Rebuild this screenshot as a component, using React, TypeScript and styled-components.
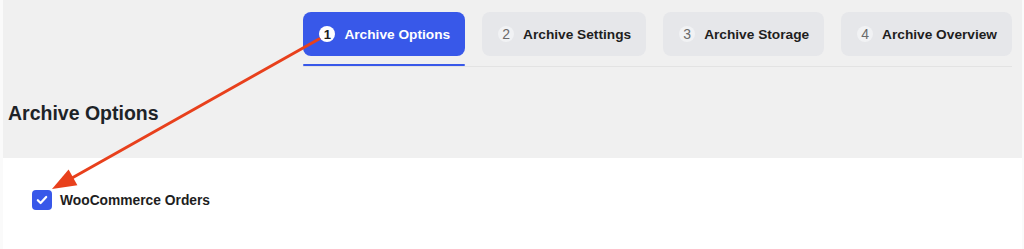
import React from "react";
import styled, { createGlobalStyle } from "styled-components";

const GlobalStyle = createGlobalStyle`
  html, body { margin: 0; padding: 0; background: #fafafa; }
  body { font-family: "Liberation Sans", Arial, sans-serif; -webkit-font-smoothing: antialiased; }
  * { box-sizing: border-box; }
`;

const Page = styled.div`
  position: relative;
  margin-left: 3px;
  width: 1019px;
  height: 249px;
  background: #f0f0f0;
  display: flex;
  flex-direction: column;
  overflow: hidden;
`;

const NavRow = styled.div`
  display: flex;
  justify-content: flex-end;
  padding: 12px 10px 0 0;
`;

const Nav = styled.nav`
  display: flex;
  gap: 17px;
  border-bottom: 1px solid #e3e3e3;
`;

const TabItem = styled.div`
  display: flex;
  flex-direction: column;
  gap: 8px;
`;

const TabButton = styled.div<{ $active?: boolean }>`
  height: 44px;
  display: flex;
  align-items: center;
  gap: 9px;
  padding: 0 15px 0 16px;
  border-radius: 8px;
  background: ${(p) => (p.$active ? "#3858e9" : "#e6e7ea")};
  color: ${(p) => (p.$active ? "#ffffff" : "#1e1e1e")};
  font-size: 13.7px;
  font-weight: 700;
  white-space: nowrap;
`;

const StepNum = styled.span<{ $active?: boolean }>`
  width: 16px;
  height: 16px;
  border-radius: 50%;
  display: flex;
  align-items: center;
  justify-content: center;
  font-size: ${(p) => (p.$active ? "13px" : "14px")};
  font-weight: ${(p) => (p.$active ? 700 : 400)};
  background: ${(p) => (p.$active ? "#ffffff" : "#f1f2f4")};
  color: ${(p) => (p.$active ? "#1e1e1e" : "#6b6b6b")};
`;

const Underline = styled.div<{ $active?: boolean }>`
  height: 2px;
  border-radius: 1px;
  background: ${(p) => (p.$active ? "#3858e9" : "transparent")};
`;

const Heading = styled.h2`
  margin: 32px 0 31px 5px;
  font-size: 19.5px;
  line-height: 28px;
  font-weight: 700;
  color: #1d2327;
`;

const Card = styled.div`
  flex: 1;
  background: #ffffff;
  padding: 32px 29px;
`;

const CheckRow = styled.label`
  display: flex;
  align-items: center;
  gap: 8px;
  font-size: 13.8px;
  font-weight: 700;
  color: #1e1e1e;
`;

const CheckBox = styled.span`
  width: 20px;
  height: 20px;
  border-radius: 4px;
  background: #3858e9;
  display: flex;
  align-items: center;
  justify-content: center;
`;

const Annotation = styled.svg`
  position: absolute;
  left: 0;
  top: 0;
  pointer-events: none;
`;

const tabs = [
  "Archive Options",
  "Archive Settings",
  "Archive Storage",
  "Archive Overview",
];

export default function App() {
  return (
    <>
      <GlobalStyle />
      <Page>
        <NavRow>
          <Nav>
            {tabs.map((t, i) => (
              <TabItem key={t}>
                <TabButton $active={i === 0}>
                  <StepNum $active={i === 0}>{i + 1}</StepNum>
                  {t}
                </TabButton>
                <Underline $active={i === 0} />
              </TabItem>
            ))}
          </Nav>
        </NavRow>
        <Heading>Archive Options</Heading>
        <Card>
          <CheckRow>
            <CheckBox>
              <svg width="16" height="16" viewBox="0 0 16 16" fill="none">
                <path d="M3.8 8.2 L6.6 11 L12.2 5" stroke="#fff" strokeWidth="2.2" strokeLinecap="round" strokeLinejoin="round" />
              </svg>
            </CheckBox>
            WooCommerce Orders
          </CheckRow>
        </Card>
        <Annotation width="1019" height="249" viewBox="3 0 1019 249">
          <line x1="319" y1="39" x2="72" y2="178" stroke="#e8401c" strokeWidth="3" strokeLinecap="round" />
          <polygon points="52,189 77.4,185.2 68.6,169.4" fill="#e8401c" />
        </Annotation>
      </Page>
    </>
  );
}
